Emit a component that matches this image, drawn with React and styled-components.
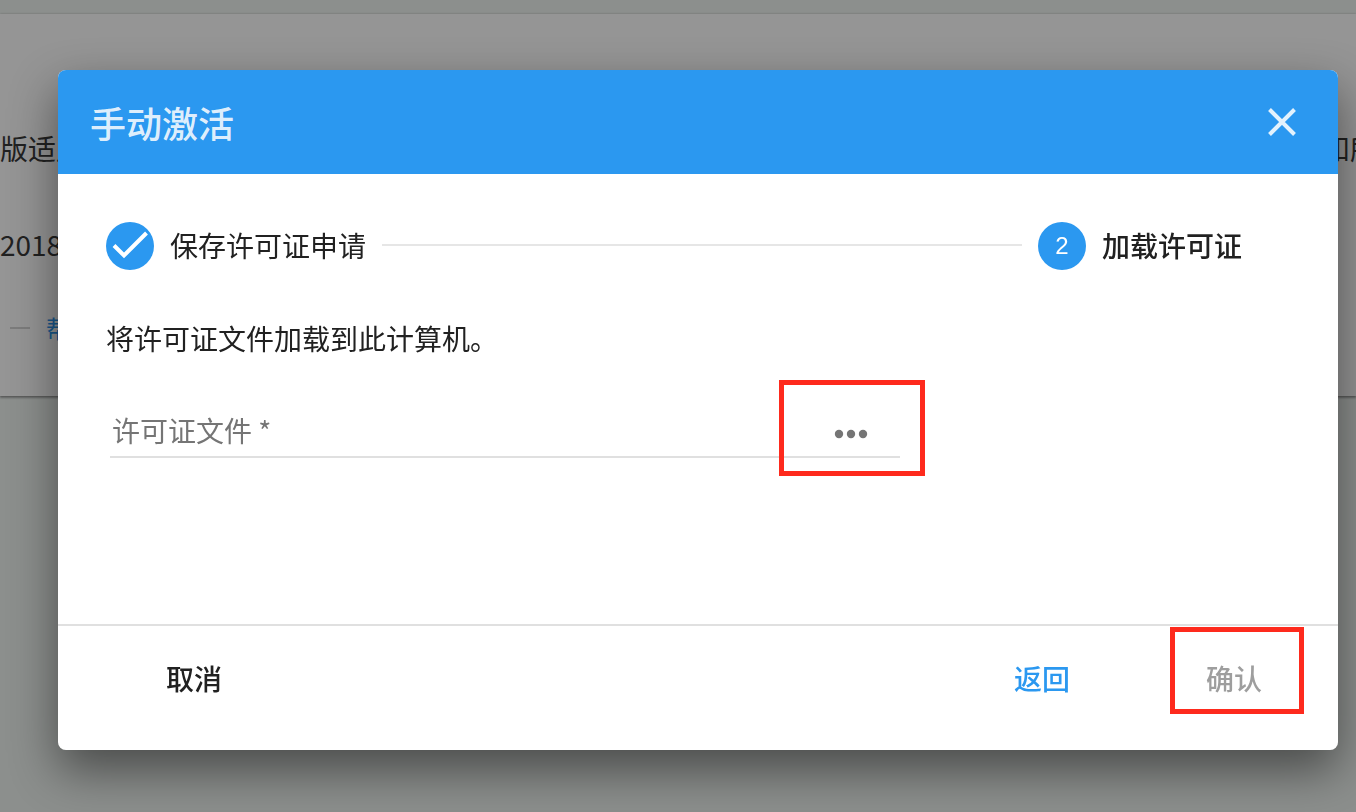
import React from "react";
import styled, { createGlobalStyle } from "styled-components";

const blue = "#2b98f0";
const ink = "#212121";

const GlobalStyle = createGlobalStyle`
  * { box-sizing: border-box; }
  body {
    margin: 0;
    min-height: 100vh;
    overflow: hidden;
    background: #8c8f8d;
    color: ${ink};
    font: 400 28px/40px "Noto Sans CJK SC", sans-serif;
  }
  button { font: inherit; color: inherit; background: none; border: 0; padding: 0; cursor: pointer; }
  h1, p, ol { margin: 0; padding: 0; }
`;

const Page = styled.div`
  min-height: 100vh;
  padding-top: 14px;
`;

const Card = styled.main`
  height: 382px;
  padding-top: 114px;
  background: #959595;
  box-shadow: 0 0 2px rgba(0, 0, 0, 0.25), 0 2px 2px rgba(0, 0, 0, 0.3);
`;

const CardLine = styled.div`
  display: flex;
  justify-content: space-between;
  height: 40px;
  margin-bottom: ${(p) => p.$gap || 0}px;
  white-space: nowrap;
`;

const LineEnd = styled.span`
  width: 34px;
  overflow: hidden;
`;

const HelpLine = styled(CardLine)`
  justify-content: flex-start;
  align-items: center;
  gap: 16px;
  padding-left: 10px;
  font-size: 24px;
`;

const Dash = styled.span`
  width: 20px;
  height: 2px;
  background: #7c7c7c;
`;

const HelpLink = styled.a`
  color: #19588c;
  text-decoration: none;
`;

const Overlay = styled.div`
  position: fixed;
  inset: 0;
  padding: 70px 18px 62px 58px;
`;

const Dialog = styled.section`
  display: flex;
  flex-direction: column;
  min-height: 680px;
  overflow: hidden;
  border-radius: 8px;
  background: #fff;
`;

const Shadow = styled.div`
  border-radius: 8px;
  box-shadow: 0 20px 48px rgba(0, 0, 0, 0.48);
`;

const Header = styled.header`
  display: flex;
  align-items: center;
  justify-content: space-between;
  height: 104px;
  padding: 0 32px;
  background: ${blue};
  color: rgba(255, 255, 255, 0.87);
`;

const Title = styled.h1`
  font-size: 36px;
  line-height: 48px;
  font-weight: 500;
`;

const CloseButton = styled.button`
  display: grid;
  place-items: center;
  width: 48px;
  height: 48px;
`;

const Body = styled.div`
  flex: 1;
  padding: 48px;
`;

const Steps = styled.ol`
  display: flex;
  align-items: center;
  gap: 16px;
  margin-right: 48px;
  list-style: none;
`;

const Step = styled.li`
  display: flex;
  align-items: center;
  gap: 16px;
  font-weight: ${(p) => (p.$active ? 500 : 400)};
`;

const StepLabel = styled.span`
  padding-bottom: 2px;
`;

const StepMark = styled.span`
  display: grid;
  place-items: center;
  width: 48px;
  height: 48px;
  border-radius: 50%;
  background: ${blue};
  color: #fff;
  font: 400 24px/24px "Liberation Sans", sans-serif;
`;

const StepLine = styled.li`
  flex: 1;
  height: 4px;
  border-top: 2px solid #e6e6e6;
`;

const Hint = styled.p`
  margin-top: 48px;
`;

const Field = styled.div`
  display: flex;
  position: relative;
  width: 790px;
  max-width: 100%;
  height: 50px;
  margin: 50px 0 0 4px;
  border-bottom: 2px solid #e0e0e0;
`;

const FieldInput = styled.input`
  flex: 1;
  min-width: 0;
  height: 44px;
  padding: 0 2px;
  border: 0;
  outline: 0;
  background: none;
  color: ${ink};
  font: inherit;
  &::placeholder { color: #757575; opacity: 1; }
`;

const BrowseButton = styled.button`
  display: grid;
  place-items: center;
  align-self: flex-end;
  width: 98px;
  height: 44px;
`;

const Highlight = styled.span`
  position: absolute;
  border: 5px solid #fe2a1d;
  pointer-events: none;
`;

const BrowseHighlight = styled(Highlight)`
  top: -28px;
  right: -25px;
  width: 146px;
  height: 96px;
`;

const ConfirmHighlight = styled(Highlight)`
  top: -15px;
  left: -4px;
  width: 134px;
  height: 87px;
`;

const Footer = styled.footer`
  display: flex;
  align-items: center;
  gap: 72px;
  height: 126px;
  padding: 0 44px 20px 76px;
  border-top: 2px solid #e0e0e0;
`;

const Action = styled.button`
  position: relative;
  width: 120px;
  height: 72px;
  margin-right: ${(p) => (p.$start ? "auto" : 0)};
  color: ${(p) => p.$color || ink};
  font-weight: 500;
`;

export default function App() {
  return (
    <>
      <GlobalStyle />
      <Page>
        <Card>
          <CardLine $gap={56}>
            <span>版适用</span>
            <LineEnd>和所</LineEnd>
          </CardLine>
          <CardLine $gap={44}>
            <span>2018</span>
          </CardLine>
          <HelpLine>
            <Dash />
            <HelpLink href="#help">帮助</HelpLink>
          </HelpLine>
        </Card>
      </Page>
      <Overlay>
        <Shadow>
          <Dialog role="dialog" aria-modal="true" aria-labelledby="dialog-title">
            <Header>
              <Title id="dialog-title">手动激活</Title>
              <CloseButton type="button" aria-label="关闭">
                <svg width="28" height="28" viewBox="0 0 28 28" fill="none" stroke="currentColor" strokeWidth="4">
                  <path d="M1.5 1.5 26.5 26.5M26.5 1.5 1.5 26.5" />
                </svg>
              </CloseButton>
            </Header>
            <Body>
              <Steps>
                <Step>
                  <StepMark>
                    <svg width="48" height="48" viewBox="0 0 48 48" fill="none" stroke="#fff" strokeWidth="4">
                      <path d="M8 23.5 18 33.5 40.5 11" />
                    </svg>
                  </StepMark>
                  <StepLabel>保存许可证申请</StepLabel>
                </Step>
                <StepLine aria-hidden="true" />
                <Step $active aria-current="step">
                  <StepMark>2</StepMark>
                  <StepLabel>加载许可证</StepLabel>
                </Step>
              </Steps>
              <Hint>将许可证文件加载到此计算机。</Hint>
              <Field>
                <FieldInput type="text" aria-label="许可证文件" placeholder="许可证文件 *" required />
                <BrowseButton type="button" aria-label="浏览">
                  <svg width="34" height="10" viewBox="0 0 34 10" fill="#757575">
                    <circle cx="5" cy="5" r="4.2" />
                    <circle cx="17" cy="5" r="4.2" />
                    <circle cx="29" cy="5" r="4.2" />
                  </svg>
                </BrowseButton>
                <BrowseHighlight />
              </Field>
            </Body>
            <Footer>
              <Action type="button" $start>取消</Action>
              <Action type="button" $color={blue}>返回</Action>
              <Action type="button" $color="#9e9e9e" disabled>
                确认
                <ConfirmHighlight />
              </Action>
            </Footer>
          </Dialog>
        </Shadow>
      </Overlay>
    </>
  );
}
